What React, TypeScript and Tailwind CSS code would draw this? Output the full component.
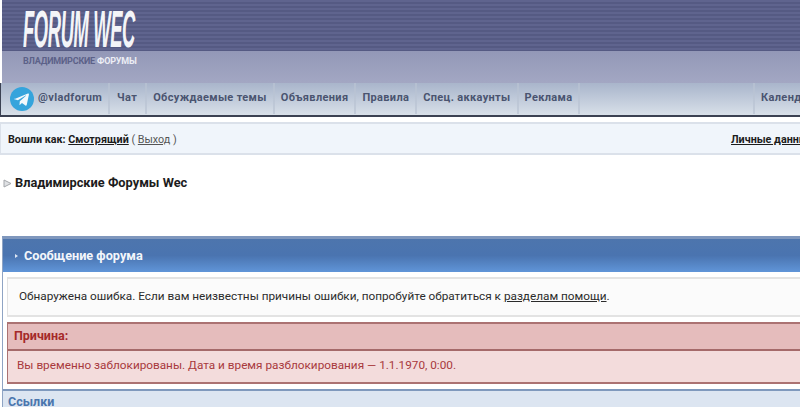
import React from 'react';

const NAV_LEFT = ['Обсуждаемые темы', 'Объявления', 'Правила', 'Спец. аккаунты', 'Реклама'];

const NavItem: React.FC<{ label: string; className?: string }> = ({ label, className = 'px-[6px]' }) => (
    <a className={`flex h-full items-center border-r-2 border-[#b9c3d3]/70 text-[11px] font-bold tracking-[0.34px] text-[#4a5470] whitespace-nowrap ${className}`}>
        {label}
    </a>
);

const TelegramIcon: React.FC = () => (
    <svg width="24" height="24" viewBox="0 0 24 24" className="shrink-0">
        <circle cx="12" cy="12" r="12" fill="#35a4dc" />
        <path d="M4.6 11.9 17.9 6.6c.7-.2 1.2.2 1 1.1l-2.2 10.2c-.2.8-.7 1-1.3.6l-3.4-2.5-1.7 1.6c-.3.3-.5.4-.8.1l.3-3.4 6.2-5.6c.3-.3-.1-.4-.4-.2l-7.7 4.8-3.3-1c-.7-.2-.7-.7 0-.9z" fill="#f2f8fc" />
    </svg>
);

export default function App() {
    return (
        <div className="relative h-[407px] w-[800px] overflow-hidden bg-white font-['Roboto',sans-serif] text-[#1c1c1c]">
            <header className="h-[83px] pl-[2px]">
                <div className="flex h-[51px] items-start bg-[#5a5f88] bg-[repeating-linear-gradient(180deg,#5f648e_0px,#5f648e_2px,#555a83_2px,#555a83_4px)] pl-[21px]">
                    <span className="mt-[9px] inline-block origin-top-left scale-x-[0.36] font-['Liberation_Sans',sans-serif] text-[51px] leading-[42px] font-bold italic tracking-[-1px] whitespace-nowrap text-[#f4f5f8]">
                        FORUM WEC
                    </span>
                </div>
                <div className="h-[32px] bg-gradient-to-b from-[#9398b7] to-[#a3a7c3] pl-[21px] pt-[3px] text-[9px] leading-[14px] font-bold tracking-[-0.2px]">
                    <span className="text-[#5c6188]">ВЛАДИМИРСКИЕ </span>
                    <span className="text-[#eceef5]">ФОРУМЫ</span>
                </div>
            </header>

            <nav className="flex h-[34px] w-[800px] items-stretch border-b-2 border-l border-[#3b4152] bg-gradient-to-b from-[#a9b5cb] to-[#d8e0e9] pb-[1px] pl-[9px]">
                <a className="flex h-full items-center gap-[4px] border-r-2 border-[#b9c3d3]/70 pr-[6px] text-[11px] font-bold tracking-[0.38px] whitespace-nowrap text-[#4a5470]">
                    <TelegramIcon />
                    @vladforum
                </a>
                <NavItem label="Чат" className="pl-[7px] pr-[8px]" />
                {NAV_LEFT.map(label => (
                    <NavItem key={label} label={label} />
                ))}
                <div className="flex-1" />
                <a className="flex h-full w-[47px] items-center border-l-2 border-[#b9c3d3]/70 pl-[6px] text-[11px] font-bold tracking-[0.38px] whitespace-nowrap text-[#4a5470]">
                    Календарь
                </a>
            </nav>

            <div className="mt-[5px] flex h-[33px] items-center justify-between overflow-hidden border-y-2 border-l border-[#dbe1ea] bg-[#f0f5fb] pl-[7px] pt-[3px] text-[10.75px]">
                <p className="whitespace-nowrap">
                    <b className="font-bold">Вошли как: </b>
                    <a className="font-bold underline">Смотрящий</a>
                    <span className="text-[#555]"> ( <a className="underline">Выход</a> )</span>
                </p>
                <a className="w-[69px] font-bold whitespace-nowrap underline">Личные данные</a>
            </div>

            <div className="mt-[20px] flex h-[16px] items-center pl-[3px] text-[12.8px] font-bold">
                <svg width="9" height="9" viewBox="0 0 9 9" className="mr-[3px] mt-[1px]">
                    <path d="M1 1 8 4.5 1 8z" fill="#dfe1e4" stroke="#a4a7ab" strokeWidth="1" />
                </svg>
                Владимирские Форумы Wec
            </div>

            <section className="mt-[45px] ml-[2px] w-[798px] border-t-[3px] border-l border-t-[#7f97bd] border-l-[#8fa4c4] pt-0">
                <h2 className="flex h-[33px] items-center bg-gradient-to-b from-[#4d75ad] via-[#4a74b0] to-[#6095d8] pl-[12px] text-[12.7px] font-bold text-[#f3f6fb]">
                    <span className="mr-[6px] h-0 w-0 border-y-[2.5px] border-l-[3px] border-y-transparent border-l-[#dfe8f5]" />
                    Сообщение форума
                </h2>

                <div className="mt-[5px] ml-[4px] flex h-[40px] items-center border-y-2 border-l border-[#e3e3e3] bg-[#fbfbfb] pl-[11px] text-[11.77px] text-[#2b2b2b]">
                    <p className="whitespace-nowrap">
                        Обнаружена ошибка. Если вам неизвестны причины ошибки, попробуйте обратиться к <a className="underline">разделам помощи</a>.
                    </p>
                </div>

                <div className="mt-[5px] ml-[4px] border-y-2 border-l border-[#ab7272] bg-[#f3dcdc]">
                    <div className="flex h-[27px] items-center border-b-2 border-[#a56a6a] bg-[#e5bcbc] pl-[6px] text-[12.5px] font-bold text-[#a52a2a]">
                        Причина:
                    </div>
                    <div className="flex h-[31px] items-center pb-[2px] pl-[9px] text-[11.77px] text-[#a8393c]">
                        Вы временно заблокированы. Дата и время разблокирования — 1.1.1970, 0:00.
                    </div>
                </div>

                <div className="mt-[5px] h-[30px] border-t-2 border-[#7f99bd] bg-[#dce5f1] pl-[5px] pt-[2px] text-[12.5px] font-bold text-[#4a76ae]">
                    Ссылки
                </div>
            </section>
        </div>
    );
}
